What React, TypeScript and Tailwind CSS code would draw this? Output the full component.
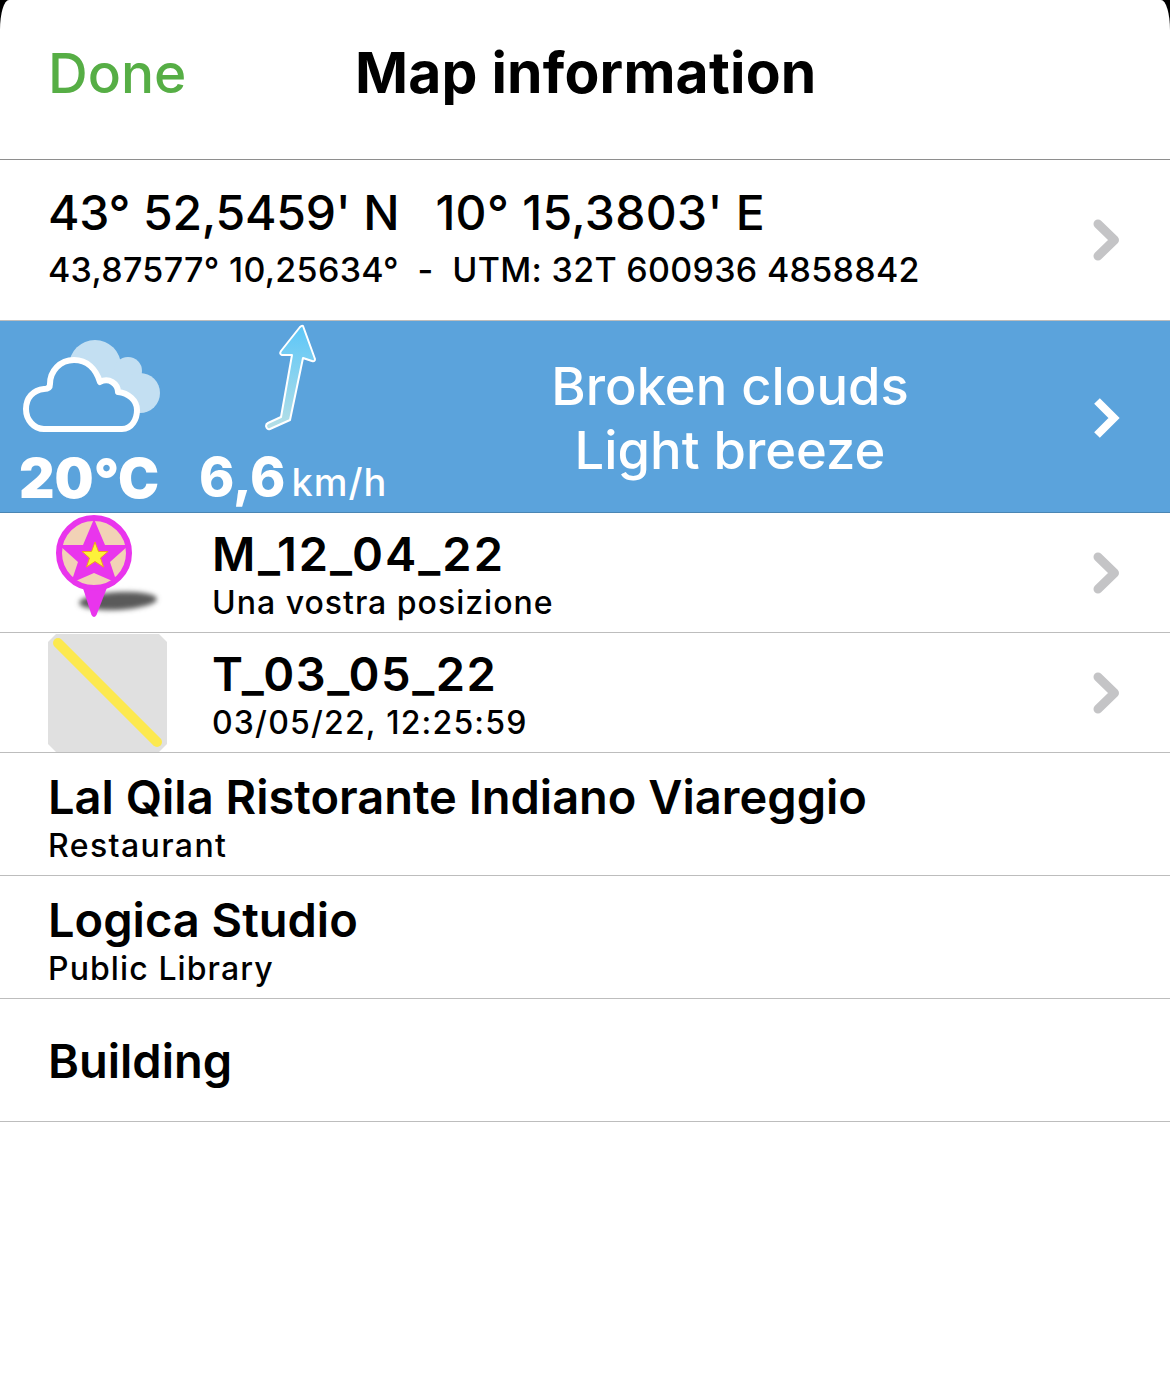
const sans = "font-['Inter','Liberation_Sans',sans-serif]";

const Chevron = ({ white }: { white?: boolean }) => (
  <svg width="28" height="42" viewBox="0 0 28 42" className="shrink-0" fill="none">
    <path
      d={white ? "M4 4 L21 21 L4 38" : "M5 5 L21.5 21 L5 37"}
      stroke={white ? "#ffffff" : "#c4c4c6"}
      strokeWidth={white ? 8 : 9}
      strokeLinecap={white ? "butt" : "round"}
      strokeLinejoin={white ? "miter" : "round"}
    />
  </svg>
);

// drawn in page coordinates, hence the offset viewBox
const Weather = () => (
  <svg width="145" height="100" viewBox="20 335 145 100" fill="none">
    <g fill="#c3dff2">
      <circle cx="95" cy="366" r="26" />
      <circle cx="128" cy="371" r="14" />
      <circle cx="140" cy="393" r="20" />
      <rect x="90" y="375" width="50" height="38" />
    </g>
    <path
      d="M44 429 H122 C132 429 137 419 137 410 C137 400 128 393 118 392 C118 384 109 377 100 382 C96 369 87 360 74 360 C60 360 50 371 50 384 C50 388 47 389 44 389 C33 390 26 398 26 409 C26 420 34 429 44 429 Z"
      fill="#5ba3dc"
      stroke="#ffffff"
      strokeWidth="6"
      strokeLinejoin="round"
    />
  </svg>
);

const WindArrow = () => (
  <svg width="60" height="115" viewBox="260 320 60 115" fill="none">
    <defs>
      <linearGradient id="wind" x1="0" y1="0" x2="0" y2="1">
        <stop offset="0" stopColor="#5cc6f8" />
        <stop offset="1" stopColor="#b5dfe6" />
      </linearGradient>
    </defs>
    <path
      d="M303 325 L315 358 Q315 361 312 360 L303 357 L290 419 L270 428 Q267 429 266 425 Q266 423 268 422 L281 416 L292 354 L282 354 Q279 353 281 350 L300 326 Q302 324 303 325 Z"
      fill="url(#wind)"
      stroke="#ffffff"
      strokeWidth="2"
      strokeLinejoin="round"
    />
  </svg>
);

const Pin = () => (
  <svg width="120" height="110" viewBox="0 0 120 110" fill="none">
    <defs>
      <filter id="blur" x="-30%" y="-100%" width="160%" height="300%">
        <feGaussianBlur stdDeviation="2.5" />
      </filter>
    </defs>
    <ellipse cx="71" cy="88" rx="39" ry="9" fill="#5a5a5a" filter="url(#blur)" transform="rotate(-3 71 88)" />
    <path d="M35 72 L61 72 L49.5 102 Q47 106 44.5 102 Z" fill="#e935ed" />
    <circle cx="47" cy="40" r="35" fill="#f2d2b6" stroke="#e935ed" strokeWidth="6" />
    <path d="M47 6 L58 32 L82 32 L63 49 L70 70 L47 60 L24 70 L31 49 L12 32 L36 32 Z" fill="#e935ed" />
    <path
      d="M48 29 L51.5 38.5 L61 38.5 L53.5 45 L56.5 54 L48 48.5 L39.5 54 L42.5 45 L35 38.5 L44.5 38.5 Z"
      fill="#fdf13a"
      stroke="#f0a020"
      strokeWidth="1"
    />
  </svg>
);

const Track = () => (
  <svg width="119" height="118" viewBox="0 0 119 118" fill="none">
    <path d="M8 0 H111 L119 8 V110 L111 118 H8 L0 110 V8 Z" fill="#e0e0e0" />
    <path d="M10 9 L109 108" stroke="#fce94f" strokeWidth="10" strokeLinecap="round" />
  </svg>
);

const Row = ({ title, sub, subClass }: { title: string; sub?: string; subClass?: string }) => (
  <div className={`flex h-[123px] flex-col justify-center border-b border-[#bdbdbd] pl-[48px] ${sub ? "pt-[5px]" : "pt-[1px]"}`}>
    <div className="text-[47px] leading-[56px] font-semibold text-black">{title}</div>
    {sub && <div className={`mt-[3px] text-[32px] leading-[36px] font-medium text-black ${subClass}`}>{sub}</div>}
  </div>
);

export default function App() {
  return (
    <div className={`${sans} h-[1396px] w-[1170px] overflow-hidden bg-black`}>
      <div className="h-full rounded-tl-[9px_30px] rounded-tr-[9px_30px] bg-white">
        <header className="relative h-[160px] border-b border-[#8e8e8e]">
          <button className="absolute left-[48px] top-[39px] text-[55px] leading-[68px] font-medium text-[#56ae45]">Done</button>
          <h1 className="pt-[39px] pl-[355px] text-[57px] leading-[68px] font-bold tracking-[0.2px] text-black">Map information</h1>
        </header>

        <div className="flex h-[161px] items-center justify-between border-b border-[#bdbdbd] pb-[5px] pl-[48px] pr-[49px]">
          <div className="text-black">
            <div className="flex gap-[36px] text-[48px] leading-[56px] font-medium">
              <span className="tracking-[-0.2px]">43° 52,5459' N</span>
              <span className="tracking-[0.3px]">10° 15,3803' E</span>
            </div>
            <div className="mt-[9px] text-[34px] leading-[40px] font-medium tracking-[0.3px] whitespace-pre">43,87577° 10,25634°  -  UTM: 32T 600936 4858842</div>
          </div>
          <div className="mt-[5px]"><Chevron /></div>
        </div>

        <div className="flex h-[192px] items-stretch border-b border-[#4a86b4] bg-[#5ba3dc] text-white">
          <div className="flex w-[195px] flex-col items-start">
            <div className="mt-[14px] ml-[20px] h-[100px]"><Weather /></div>
            <div className="mt-[13px] ml-[19px] text-[55px] leading-[60px] font-black">20°C</div>
          </div>
          <div className="flex w-[200px] flex-col">
            <div className="ml-[65px] h-[115px]"><WindArrow /></div>
            <div className="mt-[11px] ml-[4px] flex items-baseline gap-[6px] leading-[60px]">
              <span className="text-[53.5px] font-extrabold">6,6</span>
              <span className="text-[38px] font-medium tracking-[1px]">km/h</span>
            </div>
          </div>
          <div className="flex flex-1 flex-col items-center justify-center pt-[2px] pr-[28px] text-[52.5px] leading-[64px] font-medium">
            <span>Broken clouds</span>
            <span>Light breeze</span>
          </div>
          <div className="flex items-center pr-[49px] pt-[3px]"><Chevron white /></div>
        </div>

        <div className="flex h-[120px] items-center border-b border-[#bdbdbd] pr-[49px]">
          <div className="ml-[47px] h-[110px] w-[120px] shrink-0 self-start"><Pin /></div>
          <div className="ml-[45px] flex-1">
            <div className="text-[47px] leading-[56px] font-semibold tracking-[2px] text-black">M_12_04_22</div>
            <div className="mt-[4px] text-[32px] leading-[34px] font-medium tracking-[1px] text-black">Una vostra posizione</div>
          </div>
          <Chevron />
        </div>

        <div className="flex h-[120px] items-center border-b border-[#bdbdbd] pr-[49px]">
          <div className="ml-[48px] h-[118px] w-[119px] shrink-0"><Track /></div>
          <div className="ml-[45px] flex-1">
            <div className="text-[47px] leading-[56px] font-semibold tracking-[1.5px] text-black">T_03_05_22</div>
            <div className="mt-[4px] text-[32px] leading-[34px] font-medium tracking-[1.2px] text-black">03/05/22, 12:25:59</div>
          </div>
          <Chevron />
        </div>

        <Row title="Lal Qila Ristorante Indiano Viareggio" sub="Restaurant" subClass="tracking-[1.4px]" />
        <Row title="Logica Studio" sub="Public Library" subClass="tracking-[1.1px]" />
        <Row title="Building" />
      </div>
    </div>
  );
}
